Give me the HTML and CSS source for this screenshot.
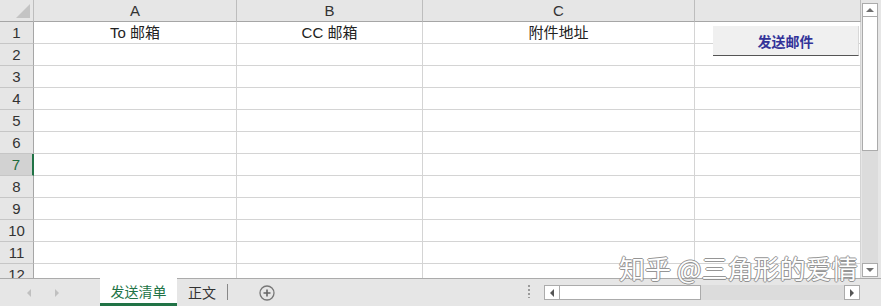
FILE: index.html
```html
<!DOCTYPE html>
<html lang="zh-CN">
<head>
  <meta charset="UTF-8">
  <link rel="stylesheet" href="styles.css">
  <title>发送清单</title>
</head>
<body>
  <div class="workbook">
    <div class="main">
      <div class="grid">
        <div class="row head-row">
          <div class="cell rh corner"><span class="corner-tri"></span></div>
          <div class="cell ch">A</div>
          <div class="cell ch">B</div>
          <div class="cell ch">C</div>
          <div class="cell ch"></div>
        </div>
        <div class="row">
          <div class="cell rh">1</div>
          <div class="cell">To 邮箱</div>
          <div class="cell">CC 邮箱</div>
          <div class="cell">附件地址</div>
          <div class="cell"></div>
        </div>
        <div class="row"><div class="cell rh">2</div><div class="cell"></div><div class="cell"></div><div class="cell"></div><div class="cell"></div></div>
        <div class="row"><div class="cell rh">3</div><div class="cell"></div><div class="cell"></div><div class="cell"></div><div class="cell"></div></div>
        <div class="row"><div class="cell rh">4</div><div class="cell"></div><div class="cell"></div><div class="cell"></div><div class="cell"></div></div>
        <div class="row"><div class="cell rh">5</div><div class="cell"></div><div class="cell"></div><div class="cell"></div><div class="cell"></div></div>
        <div class="row"><div class="cell rh">6</div><div class="cell"></div><div class="cell"></div><div class="cell"></div><div class="cell"></div></div>
        <div class="row"><div class="cell rh active">7</div><div class="cell"></div><div class="cell"></div><div class="cell"></div><div class="cell"></div></div>
        <div class="row"><div class="cell rh">8</div><div class="cell"></div><div class="cell"></div><div class="cell"></div><div class="cell"></div></div>
        <div class="row"><div class="cell rh">9</div><div class="cell"></div><div class="cell"></div><div class="cell"></div><div class="cell"></div></div>
        <div class="row"><div class="cell rh">10</div><div class="cell"></div><div class="cell"></div><div class="cell"></div><div class="cell"></div></div>
        <div class="row"><div class="cell rh">11</div><div class="cell"></div><div class="cell"></div><div class="cell"></div><div class="cell"></div></div>
        <div class="row"><div class="cell rh">12</div><div class="cell"></div><div class="cell"></div><div class="cell"></div><div class="cell"></div></div>

        <button class="send-btn">发送邮件</button>
      </div>
      <div class="vscroll">
        <div class="sb-btn"><span class="tri-up"></span></div>
        <div class="vthumb"></div>
        <div class="vtrack"></div>
        <div class="sb-btn"><span class="tri-down"></span></div>
      </div>
    </div>

    <div class="tabbar">
      <div class="nav">
        <span class="tri-left"></span>
        <span class="tri-right"></span>
      </div>
      <div class="tab current">发送清单</div>
      <div class="tab">正文</div>
      <div class="tab-sep"></div>
      <div class="add-sheet">
        <svg width="16" height="16" viewBox="0 0 16 16">
          <circle cx="8" cy="8" r="7" fill="none" stroke="#777" stroke-width="1.3"/>
          <path d="M8 4.5v7M4.5 8h7" stroke="#666" stroke-width="1.6"/>
        </svg>
      </div>
      <div class="split-dots"></div>
      <div class="hscroll">
        <div class="sb-btn h"><span class="tri-left dark"></span></div>
        <div class="hthumb"></div>
        <div class="htrack"></div>
        <div class="sb-btn h"><span class="tri-right dark"></span></div>
      </div>
    </div>

    <div class="watermark">知乎 @三角形的爱情</div>
  </div>
</body>
</html>
```

FILE: styles.css
```css
body {
  margin: 0;
  background: #e6e6e6;
  font-family: "Liberation Sans", "Noto Sans CJK SC", sans-serif;
  color: #222;
}

.workbook {
  position: relative;
  width: 881px;
  height: 306px;
  display: flex;
  flex-direction: column;
  overflow: hidden;
}

.main {
  height: 278px;
  display: flex;
  overflow: hidden;
}

.grid {
  position: relative;
  width: 861px;
  background: #fff;
  overflow: hidden;
}

.row {
  display: grid;
  grid-template-columns: 34px 203px 186px 272px 166px;
  height: 22px;
}

.cell {
  box-sizing: border-box;
  height: 22px;
  border-right: 1px solid #d4d4d4;
  border-bottom: 1px solid #d4d4d4;
  font-size: 15px;
  line-height: 21px;
  text-align: center;
  white-space: nowrap;
}

.head-row .cell {
  background: #e6e6e6;
  border-bottom-color: #a6a6a6;
  border-right-color: #bdbdbd;
  font-size: 15px;
  color: #333;
}

.rh {
  background: #e6e6e6;
  border-right-color: #a6a6a6;
  border-bottom-color: #c6c6c6;
  font-size: 15px;
  color: #333;
}

.rh.active {
  background: #d2d2d2;
  color: #1e6b3c;
  border-right: 2px solid #217346;
}

.corner {
  position: relative;
}

.corner-tri {
  position: absolute;
  right: 3px;
  bottom: 3px;
  width: 0;
  height: 0;
  border-left: 14px solid transparent;
  border-bottom: 14px solid #c4c4c4;
}

.send-btn {
  position: absolute;
  left: 713px;
  top: 26px;
  width: 146px;
  height: 30px;
  background: #f0f0f0;
  border: none;
  border-bottom: 1px solid #555;
  border-right: 1px solid #d8d8d8;
  font-family: "Noto Sans CJK SC", sans-serif;
  font-weight: bold;
  font-size: 14px;
  color: #333399;
  padding: 0;
}

.watermark {
  position: absolute;
  left: 619px;
  top: 251px;
  font-family: "Noto Sans CJK SC", sans-serif;
  font-size: 26px;
  line-height: 34px;
  color: #fff;
  text-shadow: 1px 0 #8a8a8a, -1px 0 #8a8a8a, 0 1px #8a8a8a, 0 -1px #8a8a8a;
  opacity: 0.9;
  white-space: nowrap;
}

/* scrollbars */
.vscroll {
  width: 20px;
  background: #e6e6e6;
  display: flex;
  flex-direction: column;
  padding: 3px 2px 1px 1px;
  box-sizing: border-box;
}

.sb-btn {
  box-sizing: border-box;
  width: 16px;
  height: 14px;
  background: #fff;
  border: 1px solid #ababab;
  display: flex;
  align-items: center;
  justify-content: center;
}

.vthumb {
  height: 134px;
  background: #fff;
  border: 1px solid #ababab;
  border-top: none;
  box-sizing: border-box;
  width: 16px;
}

.vtrack {
  flex: 1;
  background: #dcdcdc;
  width: 16px;
}

.tri-up {
  border-left: 4px solid transparent;
  border-right: 4px solid transparent;
  border-bottom: 4px solid #707070;
}

.tri-down {
  border-left: 4px solid transparent;
  border-right: 4px solid transparent;
  border-top: 4px solid #707070;
}

.tri-left {
  border-top: 4px solid transparent;
  border-bottom: 4px solid transparent;
  border-right: 4px solid #c0c0c0;
}

.tri-right {
  border-top: 4px solid transparent;
  border-bottom: 4px solid transparent;
  border-left: 4px solid #c0c0c0;
}

.tri-left.dark {
  border-right-color: #555;
}

.tri-right.dark {
  border-left-color: #555;
}

/* sheet tabs */
.tabbar {
  height: 28px;
  background: #e6e6e6;
  border-top: 1px solid #ababab;
  box-sizing: border-box;
  display: flex;
  align-items: stretch;
  font-family: "Noto Sans CJK SC", sans-serif;
  font-size: 14px;
}

.nav {
  width: 100px;
  display: flex;
  align-items: center;
  gap: 24px;
  padding-left: 27px;
  box-sizing: border-box;
}

.tab {
  display: flex;
  align-items: center;
  padding: 0 11px;
  color: #333;
  margin-top: -1px;
}

.tab.current {
  width: 77px;
  box-sizing: border-box;
  justify-content: center;
  padding: 0;
  background: #fff;
  color: #217346;
  border-bottom: 3px solid #217346;
}

.tab-sep {
  width: 1px;
  background: #888;
  margin: 5px 0 6px;
}

.add-sheet {
  display: flex;
  align-items: center;
  margin-left: 31px;
}

.split-dots {
  width: 2px;
  margin: 6px 0 8px 253px;
  background: repeating-linear-gradient(#9a9a9a 0 2px, transparent 2px 4px);
}

.hscroll {
  display: flex;
  align-items: center;
  margin-left: 14px;
}

.sb-btn.h {
  width: 16px;
  height: 15px;
}

.hthumb {
  width: 141px;
  height: 15px;
  box-sizing: border-box;
  background: #fff;
  border: 1px solid #ababab;
  border-left: none;
}

.htrack {
  width: 143px;
  height: 15px;
  background: #dcdcdc;
}
```
